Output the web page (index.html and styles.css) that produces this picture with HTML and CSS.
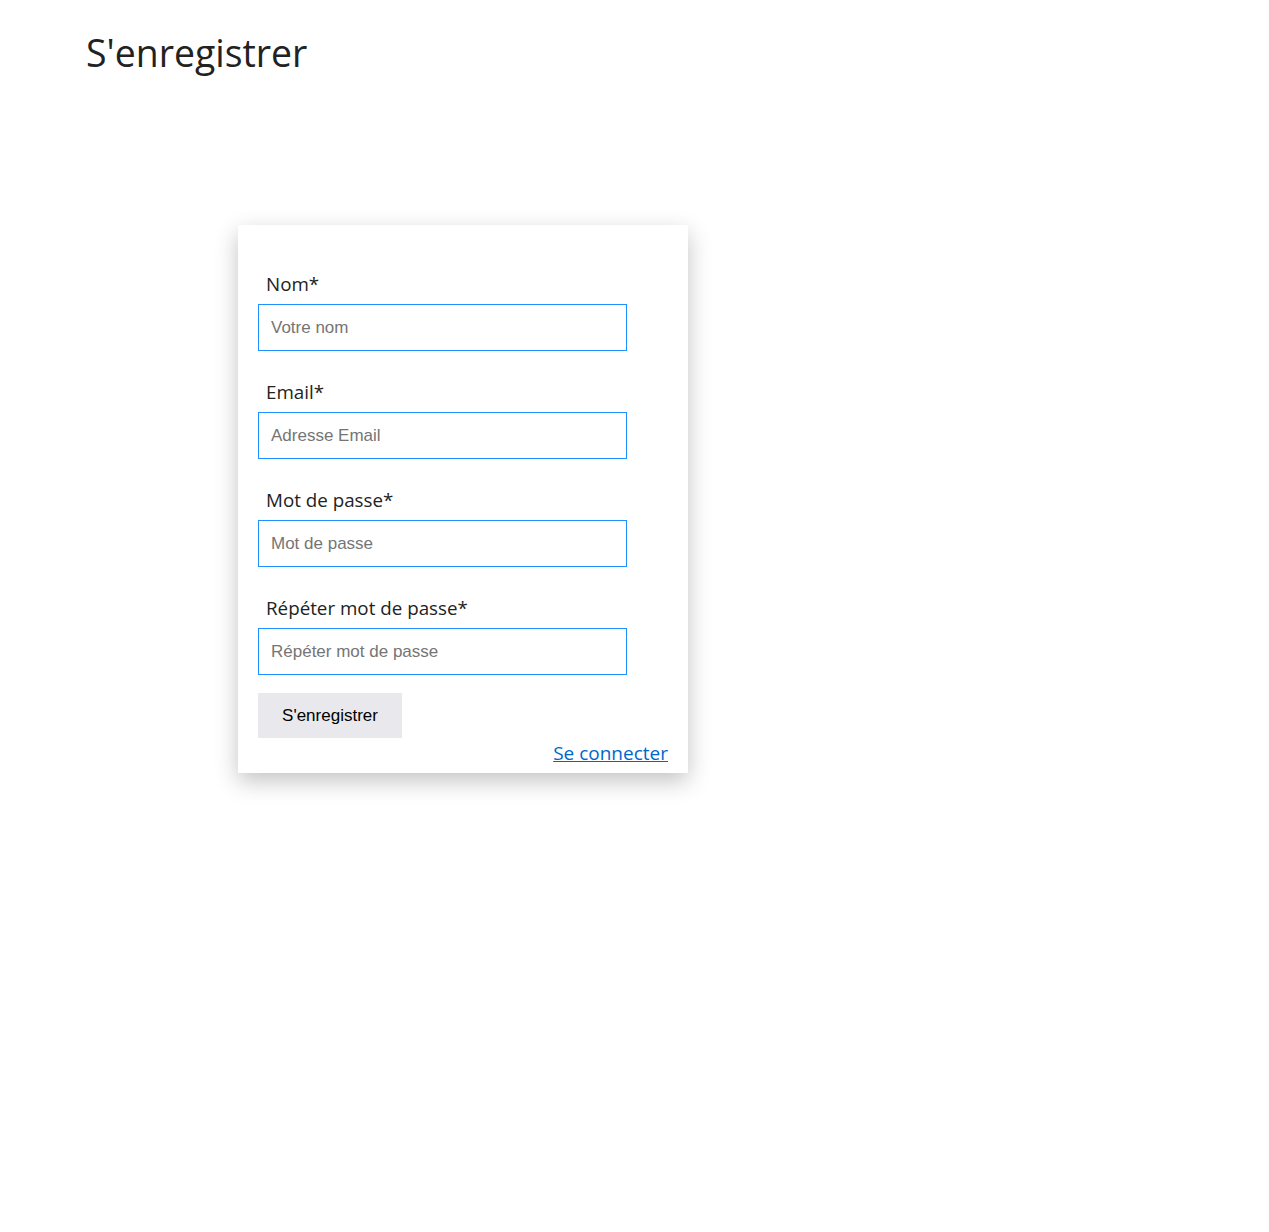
FILE: index.html
```html
<!DOCTYPE html>
<html lang="fr">
<head>
<meta charset="utf-8">
<title>S'enregistrer</title>
<link rel="stylesheet" href="styles.css">
</head>
<body>
<header class="page-header">
  <h1 class="page-title">S'enregistrer</h1>
</header>
<main class="page-main">
  <form class="card">
    <div class="field">
      <label class="field-label" for="nom">Nom*</label>
      <input class="field-input" id="nom" type="text" placeholder="Votre nom">
    </div>
    <div class="field">
      <label class="field-label" for="email">Email*</label>
      <input class="field-input" id="email" type="email" placeholder="Adresse Email">
    </div>
    <div class="field">
      <label class="field-label" for="pw">Mot de passe*</label>
      <input class="field-input" id="pw" type="password" placeholder="Mot de passe">
    </div>
    <div class="field field-last">
      <label class="field-label" for="pw2">Répéter mot de passe*</label>
      <input class="field-input" id="pw2" type="password" placeholder="Répéter mot de passe">
    </div>
    <button class="btn" type="button">S'enregistrer</button>
    <div class="card-footer">
      <a class="link" href="#">Se connecter</a>
    </div>
  </form>
</main>
</body>
</html>
```
FILE: styles.css
```css
* { box-sizing: border-box; }
html, body { min-height: 100%; }
body {
  margin: 0;
  min-height: 100vh;
  background: #fff;
  color: #222;
  font-family: "Open Sans", "Noto Sans", sans-serif;
}
.page-header {
  padding: 24px 0 0 86px;
}
.page-title {
  margin: 0;
  font-size: 37.4px;
  font-weight: 400;
  line-height: 58px;
  color: #222;
}
.page-main {
  padding: 143px 0 80px 238px;
}
.card {
  width: 450px;
  background: #fff;
  box-shadow: 0 8px 22px rgba(0,0,0,0.24);
  padding: 37px 20px 5px 20px;
  display: flex;
  flex-direction: column;
}
.field {
  display: flex;
  flex-direction: column;
  margin-bottom: 19px;
}
.field-last { margin-bottom: 18px; }
.field-label {
  padding-left: 8px;
  font-size: 18.8px;
  line-height: 28px;
  margin: 8px 0 6px 0;
  color: #222;
}
.field-input {
  width: 369px;
  height: 47px;
  border: 1px solid #1e90ff;
  border-radius: 0;
  padding: 0 12px;
  font-family: "Liberation Sans", Arial, sans-serif;
  font-size: 17px;
  color: #222;
  outline: none;
}
.field-input::placeholder { color: #757575; }
.btn {
  align-self: flex-start;
  width: 144px;
  height: 45px;
  border: none;
  background: #e9e9ed;
  font-family: "Liberation Sans", Arial, sans-serif;
  font-size: 17px;
  color: #000;
  margin: 0;
}
.card-footer {
  display: flex;
  justify-content: flex-end;
  line-height: 30px;
}
.link {
  font-size: 19px;
  color: #0066cc;
  text-decoration: underline;
}
```
